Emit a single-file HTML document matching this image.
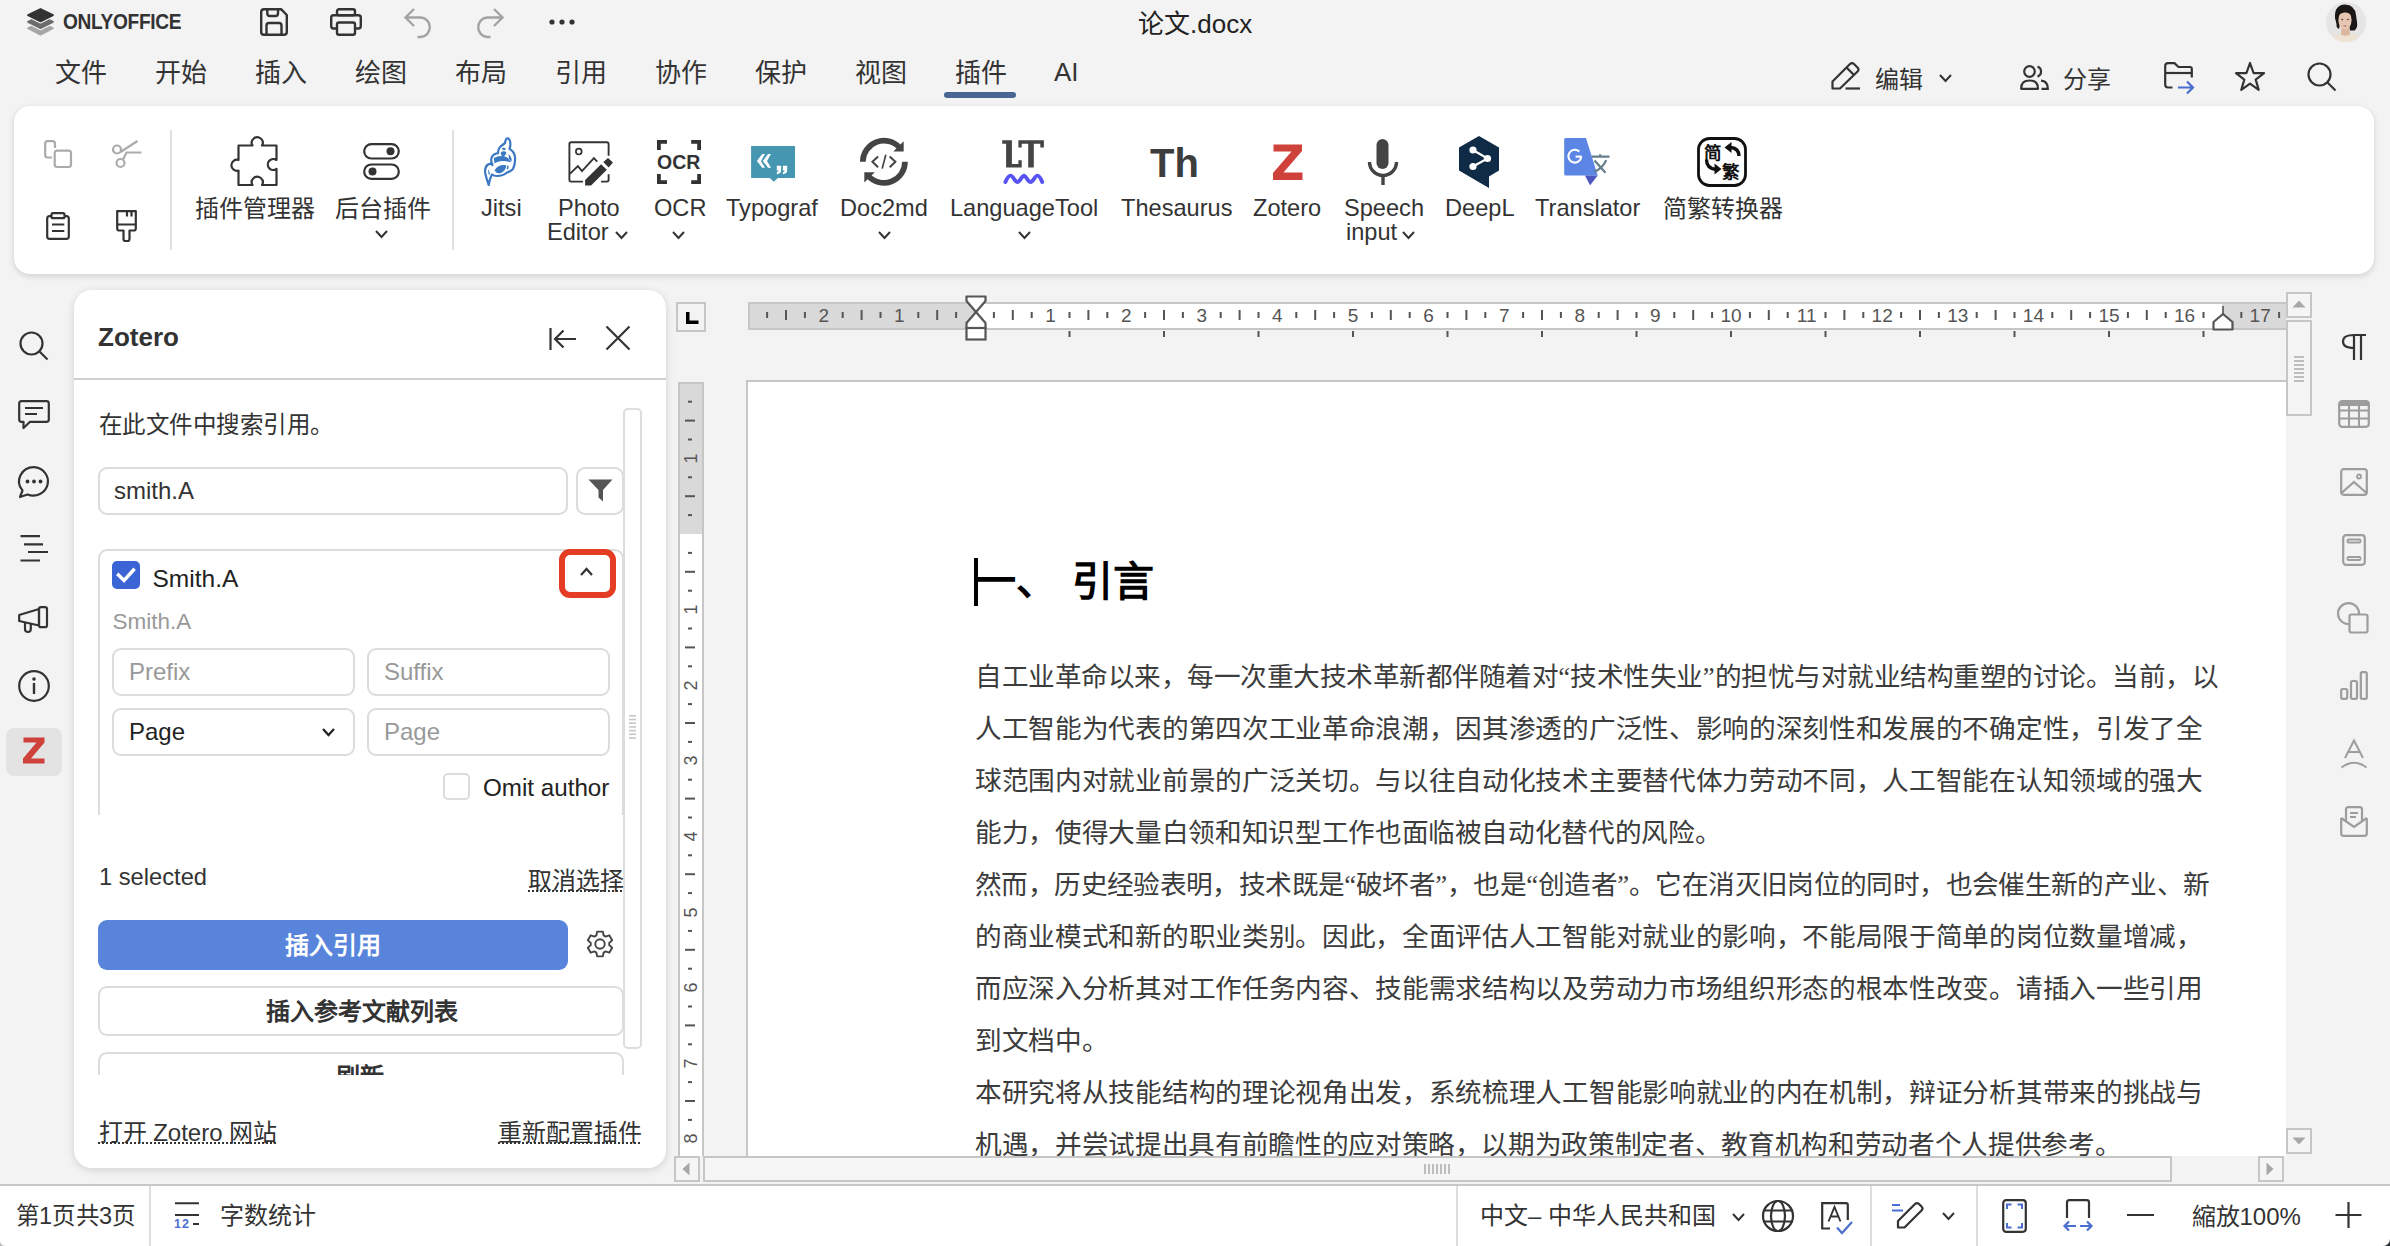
<!DOCTYPE html>
<html lang="zh-CN"><head><meta charset="utf-8"><title>ONLYOFFICE</title>
<style>
*{box-sizing:border-box;margin:0;padding:0}
html,body{width:2390px;height:1246px;overflow:hidden;background:#f3f3f3;font-family:"Liberation Sans",sans-serif;color:#333;position:relative}
.a{position:absolute}
.t{white-space:nowrap}
.t i{font-style:normal;display:inline-block;width:1em;text-align:center}
.f{display:flex}
.nf .t i{-webkit-text-fill-color:transparent;position:relative}
.nf .t i::after{content:'';position:absolute;left:9%;right:9%;top:10%;bottom:6%;background:currentColor;opacity:.42}
.nf .t[style*="weight:700"] i::after{opacity:.62}
.nf .t[style*="font-size:41px"] i::after{opacity:.45}
.nf .t i.p::after{left:12%;right:62%;top:66%;bottom:8%}
.f i{flex-shrink:0}
svg{overflow:visible}
</style></head><body>

<svg class="a" style="left:27px;top:8px;" width="27" height="28" viewBox="0 0 27 28"><path d="M13.5 14.2 L26 20.3 L13.5 26.6 L1 20.3 Z" fill="#f3f3f3" stroke="#f3f3f3" stroke-width="4" stroke-linejoin="round"/><path d="M13.5 14.2 L26 20.3 L13.5 26.6 L1 20.3 Z" fill="#a6a6a6" stroke="#a6a6a6" stroke-width="1.8" stroke-linejoin="round"/><path d="M13.5 7.8 L26 13.9 L13.5 20.2 L1 13.9 Z" fill="#f3f3f3" stroke="#f3f3f3" stroke-width="4" stroke-linejoin="round"/><path d="M13.5 7.8 L26 13.9 L13.5 20.2 L1 13.9 Z" fill="#6c6c6c" stroke="#6c6c6c" stroke-width="1.8" stroke-linejoin="round"/><path d="M13.5 1 L26 7.1 L13.5 13.4 L1 7.1 Z" fill="#f3f3f3" stroke="#f3f3f3" stroke-width="4" stroke-linejoin="round"/><path d="M13.5 1 L26 7.1 L13.5 13.4 L1 7.1 Z" fill="#333" stroke="#333" stroke-width="1.8" stroke-linejoin="round"/></svg>
<div class="a t" style="left:62.5px;top:11.2px;font-size:22px;line-height:22px;color:#333;font-weight:700;font-family:'Liberation Sans',sans-serif;letter-spacing:-0.4px;transform:scaleX(0.87);transform-origin:0 0">ONLYOFFICE</div>
<svg class="a" style="left:260px;top:8px;" width="28" height="28" viewBox="0 0 28 28">
<path d="M4 1.2 H21 L26.8 7 V24 Q26.8 26.8 24 26.8 H4 Q1.2 26.8 1.2 24 V4 Q1.2 1.2 4 1.2 Z" fill="none" stroke="#333" stroke-width="2.4" stroke-linejoin="round"/>
<path d="M7.3 1.2 V5.5 Q7.3 8 9.8 8 H15.5 Q18 8 18 5.5 V1.2" fill="none" stroke="#333" stroke-width="2.4"/>
<path d="M6.5 26.8 V17.5 Q6.5 15 9 15 H19 Q21.5 15 21.5 17.5 V26.8" fill="none" stroke="#333" stroke-width="2.4"/>
</svg>
<svg class="a" style="left:330px;top:8px;" width="32" height="28" viewBox="0 0 32 28">
<rect x="7" y="1.2" width="18" height="6" rx="2" fill="none" stroke="#333" stroke-width="2.4"/>
<path d="M6.5 20.5 H3.5 Q1.2 20.5 1.2 18 V9.5 Q1.2 7.2 3.5 7.2 H28.5 Q30.8 7.2 30.8 9.5 V18 Q30.8 20.5 28.5 20.5 H25.5" fill="none" stroke="#333" stroke-width="2.4"/>
<rect x="7" y="14.5" width="18" height="12.3" rx="2" fill="none" stroke="#333" stroke-width="2.4"/>
</svg>
<svg class="a" style="left:404px;top:8px;" width="28" height="30" viewBox="0 0 28 30">
<path d="M10 1 L1.5 9.5 L10 18 M1.5 9.5 H17 A9.8 9.8 0 0 1 17 29 H13.5" fill="none" stroke="#a3a3a3" stroke-width="2.4" stroke-linecap="butt" stroke-linejoin="miter"/>
</svg>
<svg class="a" style="left:476px;top:8px;" width="28" height="30" viewBox="0 0 28 30">
<path d="M18 1 L26.5 9.5 L18 18 M26.5 9.5 H11 A9.8 9.8 0 0 0 11 29 H14.5" fill="none" stroke="#a3a3a3" stroke-width="2.4"/>
</svg>
<svg class="a" style="left:548px;top:18px;" width="28" height="8" viewBox="0 0 28 8"><circle cx="4" cy="4" r="2.6" fill="#333"/><circle cx="14" cy="4" r="2.6" fill="#333"/><circle cx="24" cy="4" r="2.6" fill="#333"/></svg>
<div class="a t" style="left:1138px;top:10.8px;font-size:26px;line-height:26px;color:#222;font-weight:400;font-family:'Liberation Sans',sans-serif;"><i>论</i><i>文</i>.docx</div>
<svg class="a" style="left:2326px;top:2px;" width="40" height="40" viewBox="0 0 40 40">
<defs><clipPath id="av"><circle cx="20" cy="20" r="20"/></clipPath></defs>
<g clip-path="url(#av)">
<rect width="40" height="40" fill="#e5e5e5"/>
<path d="M9 16 Q8 3 19 2.5 Q29 3 30 13 L31 20 Q32 26 28.5 28.5 L24 28.5 L23 22 L14 22 L13 27 Q10 26 10.5 22 Z" fill="#1b1716"/>
<ellipse cx="20.5" cy="41" rx="17" ry="10" fill="#eee3d3"/>
<path d="M15.5 24 H23 L24 32.5 Q19.5 35 15 32.5 Z" fill="#dcb79e"/>
<ellipse cx="19" cy="18" rx="6.6" ry="9.6" fill="#e6c6b0"/>
<path d="M11.5 14 Q13 7 20 7.5 Q26 8.5 26.5 15 Q24 10 18 10.5 Q14 11 11.5 14 Z" fill="#1b1716"/>
<ellipse cx="16.2" cy="17.5" rx="1.3" ry="0.7" fill="#6b5a55"/>
<ellipse cx="22" cy="17.5" rx="1.3" ry="0.7" fill="#6b5a55"/>
<ellipse cx="19" cy="24" rx="1.8" ry="0.8" fill="#c07f78"/>
</g></svg>
<div class="a t" style="left:55px;top:59.8px;font-size:26px;line-height:26px;color:#333;font-weight:400;font-family:'Liberation Sans',sans-serif;"><i>文</i><i>件</i></div>
<div class="a t" style="left:155px;top:59.8px;font-size:26px;line-height:26px;color:#333;font-weight:400;font-family:'Liberation Sans',sans-serif;"><i>开</i><i>始</i></div>
<div class="a t" style="left:255px;top:59.8px;font-size:26px;line-height:26px;color:#333;font-weight:400;font-family:'Liberation Sans',sans-serif;"><i>插</i><i>入</i></div>
<div class="a t" style="left:355px;top:59.8px;font-size:26px;line-height:26px;color:#333;font-weight:400;font-family:'Liberation Sans',sans-serif;"><i>绘</i><i>图</i></div>
<div class="a t" style="left:455px;top:59.8px;font-size:26px;line-height:26px;color:#333;font-weight:400;font-family:'Liberation Sans',sans-serif;"><i>布</i><i>局</i></div>
<div class="a t" style="left:555px;top:59.8px;font-size:26px;line-height:26px;color:#333;font-weight:400;font-family:'Liberation Sans',sans-serif;"><i>引</i><i>用</i></div>
<div class="a t" style="left:655px;top:59.8px;font-size:26px;line-height:26px;color:#333;font-weight:400;font-family:'Liberation Sans',sans-serif;"><i>协</i><i>作</i></div>
<div class="a t" style="left:755px;top:59.8px;font-size:26px;line-height:26px;color:#333;font-weight:400;font-family:'Liberation Sans',sans-serif;"><i>保</i><i>护</i></div>
<div class="a t" style="left:855px;top:59.8px;font-size:26px;line-height:26px;color:#333;font-weight:400;font-family:'Liberation Sans',sans-serif;"><i>视</i><i>图</i></div>
<div class="a t" style="left:955px;top:59.8px;font-size:26px;line-height:26px;color:#333;font-weight:400;font-family:'Liberation Sans',sans-serif;"><i>插</i><i>件</i></div>
<div class="a t" style="left:1054px;top:58.8px;font-size:26px;line-height:26px;color:#333;font-weight:400;font-family:'Liberation Sans',sans-serif;">AI</div>
<div class="a" style="left:944px;top:92px;width:72px;height:6px;background:#486591;border-radius:3px"></div>
<svg class="a" style="left:1831px;top:61px;" width="30" height="29" viewBox="0 0 30 29">
<path d="M1.5 27.5 V20.5 L19 3 Q21 1 23 3 L26.5 6.5 Q28.5 8.5 26.5 10.5 L9 27.5 Z" fill="none" stroke="#333" stroke-width="2.2" stroke-linejoin="round"/>
<path d="M15.5 6.5 L23 14" fill="none" stroke="#333" stroke-width="2.2"/>
<path d="M14.5 27.5 H29" fill="none" stroke="#333" stroke-width="2.2"/>
</svg>
<div class="a t" style="left:1875px;top:67.5px;font-size:24px;line-height:24px;color:#333;font-weight:400;font-family:'Liberation Sans',sans-serif;"><i>编</i><i>辑</i></div>
<svg class="a" style="left:1939.0px;top:74px;" width="13" height="8.5" viewBox="0 0 13 8.5"><path d="M1 1 L6.5 7.0 L12 1" fill="none" stroke="#333" stroke-width="2"/></svg>
<svg class="a" style="left:2020px;top:65px;" width="29" height="25" viewBox="0 0 29 25">
<circle cx="9.5" cy="6.5" r="5.3" fill="none" stroke="#333" stroke-width="2.2"/>
<path d="M1.2 23.8 Q1 15.5 9.5 15.5 Q18 15.5 18 23.8 Z" fill="none" stroke="#333" stroke-width="2.2" stroke-linejoin="round"/>
<path d="M17.5 1.6 A5.3 5.3 0 0 1 17.5 11.6" fill="none" stroke="#333" stroke-width="2.2"/>
<path d="M21 15.6 Q27.8 16 27.8 23.8 H21.5" fill="none" stroke="#333" stroke-width="2.2"/>
</svg>
<div class="a t" style="left:2063px;top:67.5px;font-size:24px;line-height:24px;color:#333;font-weight:400;font-family:'Liberation Sans',sans-serif;"><i>分</i><i>享</i></div>
<svg class="a" style="left:2164px;top:62px;" width="31" height="34" viewBox="0 0 31 34">
<path d="M8.5 25.5 H4 Q1.2 25.5 1.2 22.5 V4 Q1.2 1.2 4 1.2 H10.5 L14.5 5 H26 Q27.8 5 27.8 7 V15.5" fill="none" stroke="#333" stroke-width="2.2"/>
<path d="M1.2 11 H27.5" fill="none" stroke="#333" stroke-width="2.2"/>
<path d="M14 25.5 H29 M23 19.5 L29 25.5 L23 31.5" fill="none" stroke="#4b6fcf" stroke-width="2.2"/>
</svg>
<svg class="a" style="left:2234px;top:61px;" width="32" height="30" viewBox="0 0 32 30">
<path d="M16 2 L19.6 12.2 L30 12.2 L21.7 18.6 L24.7 28.8 L16 22.6 L7.3 28.8 L10.3 18.6 L2 12.2 L12.4 12.2 Z" fill="none" stroke="#333" stroke-width="2.2" stroke-linejoin="round"/>
</svg>
<svg class="a" style="left:2307px;top:62px;" width="30" height="30" viewBox="0 0 30 30">
<circle cx="12.5" cy="12.5" r="11" fill="none" stroke="#333" stroke-width="2.2"/>
<path d="M20.5 20.5 L28.5 28.5" stroke="#333" stroke-width="2.2"/>
</svg>
<div class="a" style="left:14px;top:106px;width:2360px;height:168px;background:#fff;border-radius:16px;box-shadow:0 2px 6px rgba(0,0,0,0.15)"></div>
<svg class="a" style="left:44px;top:140px;" width="28" height="28" viewBox="0 0 28 28">
<path d="M11 8 V3.5 Q11 1.2 8.5 1.2 H3.5 Q1.2 1.2 1.2 3.5 V15 Q1.2 17.5 3.5 17.5 H8" fill="none" stroke="#ababab" stroke-width="2.2"/>
<rect x="10.7" y="10.7" width="16.3" height="16.3" rx="2.5" fill="none" stroke="#ababab" stroke-width="2.2"/>
</svg>
<svg class="a" style="left:112px;top:140px;" width="30" height="28" viewBox="0 0 30 28">
<circle cx="5" cy="9.5" r="4" fill="none" stroke="#ababab" stroke-width="2.2"/>
<circle cx="8.5" cy="23" r="4" fill="none" stroke="#ababab" stroke-width="2.2"/>
<path d="M8.5 12 L25.5 1 M11 19.5 L14.5 12.5 H29.5" fill="none" stroke="#ababab" stroke-width="2.2"/>
</svg>
<svg class="a" style="left:46px;top:212px;" width="24" height="28" viewBox="0 0 24 28">
<path d="M5 4.2 H3.5 Q1.2 4.2 1.2 6.5 V24.5 Q1.2 26.8 3.5 26.8 H20.5 Q22.8 26.8 22.8 24.5 V6.5 Q22.8 4.2 20.5 4.2 H19" fill="none" stroke="#333" stroke-width="2.2"/>
<rect x="5.5" y="1.2" width="13" height="5" rx="1.5" fill="none" stroke="#333" stroke-width="2.2"/>
<path d="M6 12.5 H18.3 M6 19 H18.3" stroke="#333" stroke-width="2.2"/>
</svg>
<svg class="a" style="left:116px;top:210px;" width="21" height="32" viewBox="0 0 21 32">
<path d="M1.2 1.2 H19.8 V18.5 Q19.8 20.5 17.8 20.5 H13.5 V29 Q13.5 31 11.5 31 H9.5 Q7.5 31 7.5 29 V20.5 H3.2 Q1.2 20.5 1.2 18.5 Z" fill="none" stroke="#333" stroke-width="2.2" stroke-linejoin="round"/>
<path d="M1.2 14.5 H19.8 M11 1.2 V6.5 M15.5 1.2 V6.5" stroke="#333" stroke-width="2.2"/>
</svg>
<div class="a" style="left:170px;top:130px;width:2px;height:120px;background:#e0e0e0"></div>
<svg class="a" style="left:231px;top:135px;" width="52" height="52" viewBox="0 0 52 52">
<path d="M7.5 10.5 H21.5 A5.5 5.5 0 1 1 31 10.5 H45.5 V25 A5.5 5.5 0 1 0 45.5 34 V50 H31 A5.5 5.5 0 1 0 21.5 50 H7.5 V35.5 A5.5 5.5 0 1 1 7.5 25 Z" fill="none" stroke="#333" stroke-width="2.2" stroke-linejoin="round"/>
</svg>
<div class="a t" style="left:195px;top:196.7px;font-size:24px;line-height:24px;color:#333;font-weight:400;font-family:'Liberation Sans',sans-serif;"><i>插</i><i>件</i><i>管</i><i>理</i><i>器</i></div>
<svg class="a" style="left:363px;top:143px;" width="37" height="38" viewBox="0 0 37 38">
<rect x="1.2" y="1.2" width="34.6" height="14.3" rx="7.15" fill="none" stroke="#333" stroke-width="2.2"/>
<rect x="1.2" y="21.5" width="34.6" height="14.3" rx="7.15" fill="none" stroke="#333" stroke-width="2.2"/>
<circle cx="27.5" cy="8.3" r="4" fill="#333"/>
<circle cx="9.5" cy="28.6" r="4" fill="#333"/>
</svg>
<div class="a t" style="left:335px;top:196.7px;font-size:24px;line-height:24px;color:#333;font-weight:400;font-family:'Liberation Sans',sans-serif;"><i>后</i><i>台</i><i>插</i><i>件</i></div>
<svg class="a" style="left:375.3px;top:229.5px;" width="13" height="8.5" viewBox="0 0 13 8.5"><path d="M1 1 L6.5 7.0 L12 1" fill="none" stroke="#333" stroke-width="2"/></svg>
<div class="a" style="left:452px;top:130px;width:2px;height:120px;background:#e0e0e0"></div>
<svg class="a" style="left:478px;top:132px;" width="44" height="58" viewBox="0 0 44 58">
<path d="M10.7 53 Q8.5 47 7.2 41 Q6.5 35 10 32.5 Q12.5 31 14.5 33 Q12.5 29 13.5 26 Q15 22 20 21.2 Q20 17 22 15 Q25 12.5 27 11 Q27.5 7 29 6.5 Q31 6 32 9 Q33 13 31.5 17 Q36 19 37 25 Q37.5 32 35 37 Q32 40 29 40.5 Q25 44 19 44 Q15.5 44 14 42.5 Q12 46 10.7 53 Z" fill="#fff" stroke="#3b78c4" stroke-width="2.2" stroke-linejoin="round"/>
<path d="M15.8 26 Q20 23.5 25 24 Q30 24.5 33.5 30.5 Q27 28.5 22 29.2 Q18 30 16.5 31.5 Z" fill="#3b78c4"/>
<path d="M16.5 38.5 Q19 34 23 33.2 Q26 32.6 28.3 33.3 Q28 38.5 23 41 Q18.5 42 16.5 38.5 Z" fill="#3b78c4"/>
<path d="M22.8 20.5 Q25.5 18.2 28.2 20 Q28.5 23 25.5 24.4 Q22.5 23.8 22.8 20.5 Z" fill="#3b78c4"/>
<path d="M23.5 16.5 Q26.5 15 28 17 L26 18.5 Z" fill="#3b78c4"/>
<path d="M30.5 22 Q34 25 33.8 29.5 L31 27 Z M10 37 Q11.5 39 12 43 L10.5 42 Z M29.5 33 Q31.5 34 30 38 L28.8 36.5 Z" fill="#3b78c4"/>
</svg>
<div class="a t" style="left:481px;top:197.4px;font-size:23.6px;line-height:23.6px;color:#333;font-weight:400;font-family:'Liberation Sans',sans-serif;">Jitsi</div>
<svg class="a" style="left:568px;top:141px;" width="47" height="46" viewBox="0 0 47 46">
<path d="M40.6 14.7 V3 Q40.6 1.2 38.8 1.2 H3.2 Q1.4 1.2 1.4 3 V38.8 Q1.4 40.6 3.2 40.6 H14.9" fill="none" stroke="#333" stroke-width="1.9"/>
<path d="M33.1 40.6 H38.8 Q40.6 40.6 40.6 38.8 V33.2" fill="none" stroke="#333" stroke-width="1.9"/>
<circle cx="10.8" cy="10.6" r="2.9" fill="none" stroke="#333" stroke-width="1.7"/>
<path d="M1.8 32.9 L9.9 25.1 L14 30.1 L25.9 17.2 L29.2 20.6" fill="none" stroke="#333" stroke-width="1.9"/>
<path d="M17.1 38.9 L33.1 23.2 L38.8 28.8 L23.1 44.5 H17.1 Z" fill="#333"/>
<path d="M35.3 21 L40 16.9 L45 21.6 L40.7 26.6 Z" fill="#333"/>
</svg>
<div class="a t" style="left:558px;top:197.4px;font-size:23.6px;line-height:23.6px;color:#333;font-weight:400;font-family:'Liberation Sans',sans-serif;">Photo</div>
<div class="a t" style="left:547px;top:221.4px;font-size:23.6px;line-height:23.6px;color:#333;font-weight:400;font-family:'Liberation Sans',sans-serif;">Editor</div>
<svg class="a" style="left:614.8px;top:230.5px;" width="13" height="8.5" viewBox="0 0 13 8.5"><path d="M1 1 L6.5 7.0 L12 1" fill="none" stroke="#333" stroke-width="2"/></svg>
<svg class="a" style="left:656px;top:139px;" width="46" height="46" viewBox="0 0 46 46">
<path d="M2.9 11 V2.9 H11 M35.2 2.9 H43.1 V11 M43.1 35 V43.1 H35.2 M11 43.1 H2.9 V35" fill="none" stroke="#333" stroke-width="3.8"/>
<text x="1" y="30.2" font-family="Liberation Sans" font-weight="700" font-size="20.5" fill="#333" textLength="43.3" lengthAdjust="spacingAndGlyphs">OCR</text>
</svg>
<div class="a t" style="left:654px;top:197.4px;font-size:23.6px;line-height:23.6px;color:#333;font-weight:400;font-family:'Liberation Sans',sans-serif;">OCR</div>
<svg class="a" style="left:672.0px;top:230.5px;" width="13" height="8.5" viewBox="0 0 13 8.5"><path d="M1 1 L6.5 7.0 L12 1" fill="none" stroke="#333" stroke-width="2"/></svg>
<svg class="a" style="left:750px;top:145px;" width="46" height="38" viewBox="0 0 46 38">
<path d="M1.1 1 H45 V32.9 H27.9 L23.8 36.8 L19.7 32.9 H1.1 Z" fill="#4596b1"/>
<path d="M12.2 8.9 H15 L11 16 L15 22.8 H12.2 L6.9 16 Z" fill="#fff"/>
<path d="M18.1 8.9 H21 L17 16 L21 22.8 H18.1 L12.8 16 Z" fill="#fff"/>
<path d="M26.8 20.8 H31.1 V25.6 Q31 28.8 26.8 29.2 V27.3 Q28.5 26.8 28.7 25.6 H26.8 Z" fill="#fff"/>
<path d="M32.9 20.8 H37.2 V25.6 Q37.1 28.8 32.9 29.2 V27.3 Q34.6 26.8 34.8 25.6 H32.9 Z" fill="#fff"/>
</svg>
<div class="a t" style="left:726px;top:197.4px;font-size:23.6px;line-height:23.6px;color:#333;font-weight:400;font-family:'Liberation Sans',sans-serif;">Typograf</div>
<svg class="a" style="left:855px;top:133px;" width="55" height="55" viewBox="0 0 55 55">
<path d="M7.8 28.8 A21.1 21.1 0 0 1 44.6 14.7" fill="none" stroke="#444" stroke-width="5.7"/>
<path d="M48.7 8.2 L48.7 18.6 L38.3 18.6 Z" fill="#444"/>
<path d="M50 28.8 A21.1 21.1 0 0 1 13.2 42.9" fill="none" stroke="#444" stroke-width="5.7"/>
<path d="M9.3 39.3 L19.8 39.3 L9.3 49.4 Z" fill="#444"/>
<path d="M23.1 23.4 L17.4 28.8 L23.1 34.3 M34.7 23.4 L40.4 28.8 L34.7 34.3" fill="none" stroke="#444" stroke-width="2"/>
<path d="M30.8 21.7 L27.2 35.6" fill="none" stroke="#444" stroke-width="1.7"/>
</svg>
<div class="a t" style="left:840px;top:197.4px;font-size:23.6px;line-height:23.6px;color:#333;font-weight:400;font-family:'Liberation Sans',sans-serif;">Doc2md</div>
<svg class="a" style="left:877.5px;top:230.5px;" width="13" height="8.5" viewBox="0 0 13 8.5"><path d="M1 1 L6.5 7.0 L12 1" fill="none" stroke="#333" stroke-width="2"/></svg>
<svg class="a" style="left:1001px;top:139px;" width="46" height="46" viewBox="0 0 46 46">
<path d="M1.2 1.2 H10.9 V25 H17.4 V21.2 H20.7 V28.6 H5.1 V4.8 H1.2 Z" fill="#444"/>
<path d="M17.4 1.2 H42.9 V8.6 H39.3 V4.8 H32.8 V28.6 H27.2 V4.8 H20.7 V8.6 H17.4 Z" fill="#444"/>
<path d="M4.4 43 C6.5 38 8 36.6 9.6 36.6 C12 36.6 14 43 16.4 43 C19 43 21 36.6 22.9 36.6 C25 36.6 27 43 29.6 43 C32 43 34 36.6 36.4 36.6 C38.5 36.6 40 40 41.2 43" fill="none" stroke="#5753f2" stroke-width="3.9" stroke-linecap="round"/>
</svg>
<div class="a t" style="left:950px;top:197.4px;font-size:23.6px;line-height:23.6px;color:#333;font-weight:400;font-family:'Liberation Sans',sans-serif;">LanguageTool</div>
<svg class="a" style="left:1017.5px;top:230.5px;" width="13" height="8.5" viewBox="0 0 13 8.5"><path d="M1 1 L6.5 7.0 L12 1" fill="none" stroke="#333" stroke-width="2"/></svg>
<div class="a t" style="left:1150px;top:142.9px;font-size:40px;line-height:40px;color:#3d3d3d;font-weight:700;font-family:'Liberation Sans',sans-serif;">Th</div>
<div class="a t" style="left:1121px;top:197.4px;font-size:23.6px;line-height:23.6px;color:#333;font-weight:400;font-family:'Liberation Sans',sans-serif;">Thesaurus</div>
<svg class="a" style="left:1273px;top:144px;" width="30" height="36" viewBox="0 0 30 36"><path d="M0.5 0.5 H29 V7 L10.5 28.5 H29.5 V36 H0 V29 L18.5 7.5 H0.5 Z" fill="#cf413b"/></svg>
<div class="a t" style="left:1253px;top:197.4px;font-size:23.6px;line-height:23.6px;color:#333;font-weight:400;font-family:'Liberation Sans',sans-serif;">Zotero</div>
<svg class="a" style="left:1367px;top:138px;" width="32" height="48" viewBox="0 0 32 48">
<rect x="9.5" y="1" width="12" height="30" rx="6" fill="#444"/>
<path d="M2.5 24 A13.5 13.5 0 0 0 29.5 24" fill="none" stroke="#444" stroke-width="3.4"/>
<path d="M16 37 V47" stroke="#444" stroke-width="3.4"/>
</svg>
<div class="a t" style="left:1344px;top:197.4px;font-size:23.6px;line-height:23.6px;color:#333;font-weight:400;font-family:'Liberation Sans',sans-serif;">Speech</div>
<div class="a t" style="left:1346px;top:221.4px;font-size:23.6px;line-height:23.6px;color:#333;font-weight:400;font-family:'Liberation Sans',sans-serif;">input</div>
<svg class="a" style="left:1402.0px;top:230.5px;" width="13" height="8.5" viewBox="0 0 13 8.5"><path d="M1 1 L6.5 7.0 L12 1" fill="none" stroke="#333" stroke-width="2"/></svg>
<svg class="a" style="left:1458px;top:135px;" width="42" height="54" viewBox="0 0 42 54">
<path d="M21 1 L41 12.5 V35.5 L31 41.5 V53 L21.5 47.5 L1 35.5 V12.5 Z" fill="#0f2b46"/>
<circle cx="15" cy="15" r="3.6" fill="#fff"/><circle cx="29.5" cy="23.5" r="3.6" fill="#fff"/><circle cx="15" cy="31.5" r="3.6" fill="#fff"/>
<path d="M15 15 L29.5 23.5 L15 31.5" fill="none" stroke="#fff" stroke-width="2.2"/>
</svg>
<div class="a t" style="left:1445px;top:197.4px;font-size:23.6px;line-height:23.6px;color:#333;font-weight:400;font-family:'Liberation Sans',sans-serif;">DeepL</div>
<svg class="a" style="left:1563px;top:137px;" width="48" height="50" viewBox="0 0 48 50">
<path d="M1.2 2.5 Q1.2 1 2.7 1 H23 L34.7 38.6 H2.7 Q1.2 38.6 1.2 37 Z" fill="#5b86e5"/>
<path d="M21.9 38.6 H34.7 L27.1 48.2 Z" fill="#4b56bf"/>
<path d="M18.2 19.2 A6.4 6.4 0 1 1 16.3 14.6" fill="none" stroke="#fff" stroke-width="2.1"/>
<path d="M12.6 19.6 H18.6" stroke="#fff" stroke-width="2.1"/>
<path d="M28.5 19.7 H46.5 M37.2 17.2 V19.7 M31.5 23.5 L42.5 35.8 M43.2 23.2 Q40 31 31.2 35" fill="none" stroke="#667d8c" stroke-width="2.2"/>
</svg>
<div class="a t" style="left:1535px;top:197.4px;font-size:23.6px;line-height:23.6px;color:#333;font-weight:400;font-family:'Liberation Sans',sans-serif;">Translator</div>
<svg class="a" style="left:1697px;top:137px;" width="50" height="50" viewBox="0 0 50 50">
<rect x="1.5" y="1.5" width="47" height="47" rx="11" fill="none" stroke="#111" stroke-width="2.8"/>
<text x="6.5" y="22.3" font-family="Liberation Sans" font-weight="700" font-size="17.5" fill="#111">简</text>
<text x="25" y="40.8" font-family="Liberation Sans" font-weight="700" font-size="17.5" fill="#111">繁</text>
<path d="M42 19 Q42 11 33 10.5" fill="none" stroke="#111" stroke-width="3.3"/>
<path d="M27.5 10.5 L34.5 5 L34.5 16 Z" fill="#111"/>
<path d="M9.5 22.5 Q9.5 31.5 19 32.5" fill="none" stroke="#111" stroke-width="3.3"/>
<path d="M24.5 32 L17.5 37.5 L17.5 26.5 Z" fill="#111"/>
</svg>
<div class="a t" style="left:1663px;top:196.7px;font-size:24px;line-height:24px;color:#333;font-weight:400;font-family:'Liberation Sans',sans-serif;"><i>简</i><i>繁</i><i>转</i><i>换</i><i>器</i></div>
<svg class="a" style="left:19px;top:331px;" width="31" height="31" viewBox="0 0 31 31">
<circle cx="12.5" cy="12.5" r="11" fill="none" stroke="#333" stroke-width="2.2"/>
<path d="M20.5 20.5 L28.5 28.5" stroke="#333" stroke-width="2.2"/>
</svg>
<svg class="a" style="left:18px;top:400px;" width="32" height="30" viewBox="0 0 32 30">
<path d="M3.5 1.2 H28.5 Q30.8 1.2 30.8 3.5 V19.5 Q30.8 21.8 28.5 21.8 H12 L5.5 28 V21.8 H3.5 Q1.2 21.8 1.2 19.5 V3.5 Q1.2 1.2 3.5 1.2 Z" fill="none" stroke="#333" stroke-width="2.2" stroke-linejoin="round"/>
<path d="M7 8 H25 M7 14 H19" stroke="#333" stroke-width="2.2"/>
</svg>
<svg class="a" style="left:18px;top:466px;" width="32" height="33" viewBox="0 0 32 33">
<path d="M16 1.2 A14.8 14.2 0 1 1 9.5 28.5 L2 31 L4.5 24.5 A14.8 14.2 0 0 1 16 1.2 Z" fill="none" stroke="#333" stroke-width="2.2" stroke-linejoin="round"/>
<circle cx="9.5" cy="15.5" r="1.9" fill="#333"/><circle cx="16" cy="15.5" r="1.9" fill="#333"/><circle cx="22.5" cy="15.5" r="1.9" fill="#333"/>
</svg>
<svg class="a" style="left:20px;top:535px;" width="28" height="28" viewBox="0 0 28 28">
<path d="M0.5 1.2 H20 M4 9.4 H23 M8 17 H28 M0.5 25.5 H20" stroke="#333" stroke-width="2.2"/>
</svg>
<svg class="a" style="left:18px;top:606px;" width="31" height="28" viewBox="0 0 31 28">
<path d="M1.2 9 L21 3 V19.5 L1.2 15 Z" fill="none" stroke="#333" stroke-width="2.2" stroke-linejoin="round"/>
<rect x="21" y="1.2" width="8" height="20" rx="2" fill="none" stroke="#333" stroke-width="2.2"/>
<path d="M7 16.5 V23 Q7 26 10 26 Q12.8 26 12.8 23 V18" fill="none" stroke="#333" stroke-width="2.2"/>
</svg>
<svg class="a" style="left:18px;top:670px;" width="32" height="32" viewBox="0 0 32 32">
<circle cx="16" cy="16" r="14.8" fill="none" stroke="#333" stroke-width="2.2"/>
<circle cx="16" cy="9" r="1.8" fill="#333"/>
<path d="M16 13 V24" stroke="#333" stroke-width="2.4"/>
</svg>
<div class="a" style="left:6px;top:728px;width:56px;height:48px;background:#e3e3e3;border-radius:8px"></div>
<svg class="a" style="left:23px;top:737px;" width="22" height="27" viewBox="0 0 22 27"><path d="M0.5 0.5 H21.5 V5.5 L8 21.5 H21.5 V26.5 H0 V21.5 L13.5 5.5 H0.5 Z" fill="#cf413b"/></svg>
<div class="a" style="left:74px;top:290px;width:592px;height:878px;background:#fff;border-radius:18px;box-shadow:0 2px 8px rgba(0,0,0,0.14)"></div>
<div class="a t" style="left:98px;top:324.0px;font-size:26px;line-height:26px;color:#333;font-weight:700;font-family:'Liberation Sans',sans-serif;">Zotero</div>
<svg class="a" style="left:549px;top:327px;" width="28" height="24" viewBox="0 0 28 24">
<path d="M1.5 1 V23" stroke="#333" stroke-width="2.2"/>
<path d="M14.5 3.5 L6 12 L14.5 20.5 M6 12 H27" fill="none" stroke="#333" stroke-width="2.2"/>
</svg>
<svg class="a" style="left:605px;top:325px;" width="26" height="26" viewBox="0 0 26 26"><path d="M1.5 1.5 L24.5 24.5 M24.5 1.5 L1.5 24.5" stroke="#333" stroke-width="2.2"/></svg>
<div class="a" style="left:74px;top:378px;width:592px;height:2px;background:#cfcfcf"></div>
<div class="a t" style="left:98.5px;top:414.0px;font-size:23.5px;line-height:23.5px;color:#333;font-weight:400;font-family:'Liberation Sans',sans-serif;"><i>在</i><i>此</i><i>文</i><i>件</i><i>中</i><i>搜</i><i>索</i><i>引</i><i>用</i><i class="p">。</i></div>
<div class="a" style="left:98px;top:467px;width:470px;height:48px;border:2px solid #dcdcdc;border-radius:9px;background:#fff"></div>
<div class="a t" style="left:114px;top:478.7px;font-size:24px;line-height:24px;color:#333;font-weight:400;font-family:'Liberation Sans',sans-serif;">smith.A</div>
<div class="a" style="left:576px;top:467px;width:48px;height:48px;border:2px solid #dcdcdc;border-radius:9px;background:#fff"></div>
<svg class="a" style="left:588px;top:479px;" width="25" height="23" viewBox="0 0 25 23"><path d="M0.5 0.5 H24.5 L15 11 V22.5 L10.5 18.5 V11 Z" fill="#555"/></svg>
<div class="a" style="left:623px;top:408px;width:19px;height:641px;border:2px solid #dedede;border-radius:5px;background:#fff"></div>
<div class="a" style="left:98px;top:549px;width:526px;height:266px;overflow:hidden">
<div class="a" style="left:0;top:0;width:526px;height:272px;border:2px solid #dcdcdc;border-radius:9px;background:#fff"></div>
</div>
<div class="a" style="left:623px;top:549px;width:2px;height:266px;background:#dcdcdc"></div>
<div class="a" style="left:112px;top:561px;width:28px;height:28px;background:#3b65d4;border-radius:5px"></div>
<svg class="a" style="left:116px;top:566px;" width="20" height="18" viewBox="0 0 20 18"><path d="M2.5 9 L8 14.5 L17.5 4" fill="none" stroke="#fff" stroke-width="3.4" stroke-linecap="square"/></svg>
<div class="a t" style="left:152.5px;top:566.6px;font-size:24.5px;line-height:24.5px;color:#222;font-weight:400;font-family:'Liberation Sans',sans-serif;">Smith.A</div>
<div class="a" style="left:559px;top:549px;width:57px;height:49px;border:6px solid #e43d23;border-radius:11px;background:#fff"></div>
<svg class="a" style="left:580px;top:567px;" width="13" height="9" viewBox="0 0 13 9"><path d="M1 8 L6.5 2 L12 8" fill="none" stroke="#333" stroke-width="2.2"/></svg>
<div class="a t" style="left:112.5px;top:611.0px;font-size:22.5px;line-height:22.5px;color:#999;font-weight:400;font-family:'Liberation Sans',sans-serif;">Smith.A</div>
<div class="a" style="left:112px;top:648px;width:243px;height:48px;border:2px solid #dcdcdc;border-radius:9px;background:#fff"></div>
<div class="a" style="left:367px;top:648px;width:243px;height:48px;border:2px solid #dcdcdc;border-radius:9px;background:#fff"></div>
<div class="a t" style="left:129px;top:659.7px;font-size:24px;line-height:24px;color:#999;font-weight:400;font-family:'Liberation Sans',sans-serif;">Prefix</div>
<div class="a t" style="left:384px;top:659.7px;font-size:24px;line-height:24px;color:#999;font-weight:400;font-family:'Liberation Sans',sans-serif;">Suffix</div>
<div class="a" style="left:112px;top:708px;width:243px;height:48px;border:2px solid #dcdcdc;border-radius:9px;background:#fff"></div>
<div class="a" style="left:367px;top:708px;width:243px;height:48px;border:2px solid #dcdcdc;border-radius:9px;background:#fff"></div>
<div class="a t" style="left:129px;top:719.7px;font-size:24px;line-height:24px;color:#222;font-weight:400;font-family:'Liberation Sans',sans-serif;">Page</div>
<svg class="a" style="left:322.0px;top:727.5px;" width="13" height="8.5" viewBox="0 0 13 8.5"><path d="M1 1 L6.5 7.0 L12 1" fill="none" stroke="#222" stroke-width="2.2"/></svg>
<div class="a t" style="left:384px;top:719.7px;font-size:24px;line-height:24px;color:#999;font-weight:400;font-family:'Liberation Sans',sans-serif;">Page</div>
<div class="a" style="left:443px;top:773px;width:27px;height:27px;border:2px solid #dcdcdc;border-radius:5px;background:#fff"></div>
<div class="a t" style="left:483px;top:776.2px;font-size:24.2px;line-height:24.2px;color:#222;font-weight:400;font-family:'Liberation Sans',sans-serif;">Omit author</div>
<svg class="a" style="left:629px;top:715px;" width="8" height="27" viewBox="0 0 8 27"><rect x="0" y="0.0" width="7" height="1.6" fill="#c8c8c8"/><rect x="0" y="3.7" width="7" height="1.6" fill="#c8c8c8"/><rect x="0" y="7.4" width="7" height="1.6" fill="#c8c8c8"/><rect x="0" y="11.1" width="7" height="1.6" fill="#c8c8c8"/><rect x="0" y="14.8" width="7" height="1.6" fill="#c8c8c8"/><rect x="0" y="18.5" width="7" height="1.6" fill="#c8c8c8"/><rect x="0" y="22.2" width="7" height="1.6" fill="#c8c8c8"/></svg>
<div class="a t" style="left:99px;top:865.7px;font-size:23.7px;line-height:23.7px;color:#333;font-weight:400;font-family:'Liberation Sans',sans-serif;">1 selected</div>
<div class="a t" style="left:528px;top:869.2px;font-size:24px;line-height:24px;color:#333;font-weight:400;font-family:'Liberation Sans',sans-serif;"><i>取</i><i>消</i><i>选</i><i>择</i></div>
<svg class="a" style="left:528px;top:890px;" width="95" height="2" viewBox="0 0 95 2"><line x1="0" y1="1" x2="95" y2="1" stroke="#333" stroke-width="2" stroke-dasharray="2 2"/></svg>
<div class="a" style="left:98px;top:920px;width:470px;height:50px;background:#5884dc;border-radius:9px"></div>
<div class="a t" style="left:285px;top:933.7px;font-size:24px;line-height:24px;color:#fff;font-weight:700;font-family:'Liberation Sans',sans-serif;"><i>插</i><i>入</i><i>引</i><i>用</i></div>
<svg class="a" style="left:586px;top:930px;" width="28" height="28" viewBox="0 0 28 28"><path d="M10.37 5.44 L11.14 1.63 L16.86 1.63 L17.63 5.44 L19.60 6.57 L23.29 5.34 L26.15 10.29 L23.23 12.87 L23.23 15.13 L26.15 17.71 L23.29 22.66 L19.60 21.43 L17.63 22.56 L16.86 26.37 L11.14 26.37 L10.37 22.56 L8.40 21.43 L4.71 22.66 L1.85 17.71 L4.77 15.13 L4.77 12.87 L1.85 10.29 L4.71 5.34 L8.40 6.57 Z" fill="none" stroke="#444" stroke-width="1.9" stroke-linejoin="round"/><circle cx="14" cy="14" r="4.7" fill="none" stroke="#444" stroke-width="1.9"/></svg>
<div class="a" style="left:98px;top:986px;width:526px;height:50px;border:2px solid #dcdcdc;border-radius:9px;background:#fff"></div>
<div class="a t" style="left:266px;top:1000.2px;font-size:24px;line-height:24px;color:#333;font-weight:700;font-family:'Liberation Sans',sans-serif;"><i>插</i><i>入</i><i>参</i><i>考</i><i>文</i><i>献</i><i>列</i><i>表</i></div>
<div class="a" style="left:98px;top:1052px;width:526px;height:23px;overflow:hidden">
<div class="a" style="left:0;top:0;width:526px;height:50px;border:2px solid #dcdcdc;border-radius:9px;background:#fff"></div>
<div class="a t" style="left:262px;top:12.5px;transform:translateX(-50%);font-size:24px;line-height:24px;font-weight:700;color:#333"><i>刷</i><i>新</i></div>
</div>
<div class="a t" style="left:98.5px;top:1121.2px;font-size:24px;line-height:24px;color:#333;font-weight:400;font-family:'Liberation Sans',sans-serif;"><i>打</i><i>开</i> Zotero <i>网</i><i>站</i></div>
<svg class="a" style="left:98px;top:1142px;" width="179" height="2" viewBox="0 0 179 2"><line x1="0" y1="1" x2="179" y2="1" stroke="#333" stroke-width="2" stroke-dasharray="2 2"/></svg>
<div class="a t" style="left:498px;top:1121.2px;font-size:24px;line-height:24px;color:#333;font-weight:400;font-family:'Liberation Sans',sans-serif;"><i>重</i><i>新</i><i>配</i><i>置</i><i>插</i><i>件</i></div>
<svg class="a" style="left:498px;top:1142px;" width="144" height="2" viewBox="0 0 144 2"><line x1="0" y1="1" x2="144" y2="1" stroke="#333" stroke-width="2" stroke-dasharray="2 2"/></svg>
<div class="a" style="left:676px;top:302px;width:30px;height:30px;border:2px solid #c6c6c6;background:#f3f3f3"></div>
<svg class="a" style="left:686px;top:312px;" width="13" height="12" viewBox="0 0 13 12"><path d="M0 0 H3.5 V8.5 H12.5 V12 H0 Z" fill="#000"/></svg>
<div class="a" style="left:748px;top:302px;width:1538px;height:28px;background:#d9d9d9;border-top:2px solid #c6c6c6;border-bottom:2px solid #c6c6c6;border-left:2px solid #c6c6c6"></div>
<div class="a" style="left:975px;top:304px;width:1247px;height:24px;background:#fff"></div>
<svg class="a" style="left:748px;top:302px;" width="1538" height="28" viewBox="0 0 1538 28"><rect x="18.1" y="10.0" width="2" height="6" fill="#555"/><rect x="37.0" y="8.0" width="2" height="10" fill="#555"/><rect x="55.9" y="10.0" width="2" height="6" fill="#555"/><rect x="93.7" y="10.0" width="2" height="6" fill="#555"/><rect x="112.6" y="8.0" width="2" height="10" fill="#555"/><rect x="131.5" y="10.0" width="2" height="6" fill="#555"/><rect x="169.3" y="10.0" width="2" height="6" fill="#555"/><rect x="188.2" y="8.0" width="2" height="10" fill="#555"/><rect x="207.1" y="10.0" width="2" height="6" fill="#555"/><rect x="244.9" y="10.0" width="2" height="6" fill="#555"/><rect x="263.8" y="8.0" width="2" height="10" fill="#555"/><rect x="282.7" y="10.0" width="2" height="6" fill="#555"/><rect x="320.5" y="10.0" width="2" height="6" fill="#555"/><rect x="339.4" y="8.0" width="2" height="10" fill="#555"/><rect x="358.3" y="10.0" width="2" height="6" fill="#555"/><rect x="396.1" y="10.0" width="2" height="6" fill="#555"/><rect x="415.0" y="8.0" width="2" height="10" fill="#555"/><rect x="433.9" y="10.0" width="2" height="6" fill="#555"/><rect x="471.7" y="10.0" width="2" height="6" fill="#555"/><rect x="490.6" y="8.0" width="2" height="10" fill="#555"/><rect x="509.5" y="10.0" width="2" height="6" fill="#555"/><rect x="547.3" y="10.0" width="2" height="6" fill="#555"/><rect x="566.2" y="8.0" width="2" height="10" fill="#555"/><rect x="585.1" y="10.0" width="2" height="6" fill="#555"/><rect x="622.9" y="10.0" width="2" height="6" fill="#555"/><rect x="641.8" y="8.0" width="2" height="10" fill="#555"/><rect x="660.7" y="10.0" width="2" height="6" fill="#555"/><rect x="698.5" y="10.0" width="2" height="6" fill="#555"/><rect x="717.4" y="8.0" width="2" height="10" fill="#555"/><rect x="736.3" y="10.0" width="2" height="6" fill="#555"/><rect x="774.1" y="10.0" width="2" height="6" fill="#555"/><rect x="793.0" y="8.0" width="2" height="10" fill="#555"/><rect x="811.9" y="10.0" width="2" height="6" fill="#555"/><rect x="849.7" y="10.0" width="2" height="6" fill="#555"/><rect x="868.6" y="8.0" width="2" height="10" fill="#555"/><rect x="887.5" y="10.0" width="2" height="6" fill="#555"/><rect x="925.3" y="10.0" width="2" height="6" fill="#555"/><rect x="944.2" y="8.0" width="2" height="10" fill="#555"/><rect x="963.1" y="10.0" width="2" height="6" fill="#555"/><rect x="1000.9" y="10.0" width="2" height="6" fill="#555"/><rect x="1019.8" y="8.0" width="2" height="10" fill="#555"/><rect x="1038.7" y="10.0" width="2" height="6" fill="#555"/><rect x="1076.5" y="10.0" width="2" height="6" fill="#555"/><rect x="1095.4" y="8.0" width="2" height="10" fill="#555"/><rect x="1114.3" y="10.0" width="2" height="6" fill="#555"/><rect x="1152.1" y="10.0" width="2" height="6" fill="#555"/><rect x="1171.0" y="8.0" width="2" height="10" fill="#555"/><rect x="1189.9" y="10.0" width="2" height="6" fill="#555"/><rect x="1227.7" y="10.0" width="2" height="6" fill="#555"/><rect x="1246.6" y="8.0" width="2" height="10" fill="#555"/><rect x="1265.5" y="10.0" width="2" height="6" fill="#555"/><rect x="1303.3" y="10.0" width="2" height="6" fill="#555"/><rect x="1322.2" y="8.0" width="2" height="10" fill="#555"/><rect x="1341.1" y="10.0" width="2" height="6" fill="#555"/><rect x="1378.9" y="10.0" width="2" height="6" fill="#555"/><rect x="1397.8" y="8.0" width="2" height="10" fill="#555"/><rect x="1416.7" y="10.0" width="2" height="6" fill="#555"/><rect x="1454.5" y="10.0" width="2" height="6" fill="#555"/><rect x="1492.3" y="10.0" width="2" height="6" fill="#555"/><rect x="1530.1" y="10.0" width="2" height="6" fill="#555"/></svg>
<div class="a t" style="left:793.8px;top:306.1px;width:60px;text-align:center;font-size:19px;line-height:19px;color:#555">2</div>
<div class="a t" style="left:869.4px;top:306.1px;width:60px;text-align:center;font-size:19px;line-height:19px;color:#555">1</div>
<div class="a t" style="left:1020.6px;top:306.1px;width:60px;text-align:center;font-size:19px;line-height:19px;color:#555">1</div>
<div class="a t" style="left:1096.2px;top:306.1px;width:60px;text-align:center;font-size:19px;line-height:19px;color:#555">2</div>
<div class="a t" style="left:1171.8px;top:306.1px;width:60px;text-align:center;font-size:19px;line-height:19px;color:#555">3</div>
<div class="a t" style="left:1247.4px;top:306.1px;width:60px;text-align:center;font-size:19px;line-height:19px;color:#555">4</div>
<div class="a t" style="left:1323.0px;top:306.1px;width:60px;text-align:center;font-size:19px;line-height:19px;color:#555">5</div>
<div class="a t" style="left:1398.6px;top:306.1px;width:60px;text-align:center;font-size:19px;line-height:19px;color:#555">6</div>
<div class="a t" style="left:1474.2px;top:306.1px;width:60px;text-align:center;font-size:19px;line-height:19px;color:#555">7</div>
<div class="a t" style="left:1549.8px;top:306.1px;width:60px;text-align:center;font-size:19px;line-height:19px;color:#555">8</div>
<div class="a t" style="left:1625.4px;top:306.1px;width:60px;text-align:center;font-size:19px;line-height:19px;color:#555">9</div>
<div class="a t" style="left:1701.0px;top:306.1px;width:60px;text-align:center;font-size:19px;line-height:19px;color:#555">10</div>
<div class="a t" style="left:1776.6px;top:306.1px;width:60px;text-align:center;font-size:19px;line-height:19px;color:#555">11</div>
<div class="a t" style="left:1852.2px;top:306.1px;width:60px;text-align:center;font-size:19px;line-height:19px;color:#555">12</div>
<div class="a t" style="left:1927.8px;top:306.1px;width:60px;text-align:center;font-size:19px;line-height:19px;color:#555">13</div>
<div class="a t" style="left:2003.4px;top:306.1px;width:60px;text-align:center;font-size:19px;line-height:19px;color:#555">14</div>
<div class="a t" style="left:2079.0px;top:306.1px;width:60px;text-align:center;font-size:19px;line-height:19px;color:#555">15</div>
<div class="a t" style="left:2154.6px;top:306.1px;width:60px;text-align:center;font-size:19px;line-height:19px;color:#555">16</div>
<div class="a t" style="left:2230.2px;top:306.1px;width:60px;text-align:center;font-size:19px;line-height:19px;color:#555">17</div>
<svg class="a" style="left:748px;top:331px;" width="1538" height="6" viewBox="0 0 1538 6"><rect x="320.5" y="0" width="2" height="6" fill="#555"/><rect x="415.0" y="0" width="2" height="6" fill="#555"/><rect x="509.5" y="0" width="2" height="6" fill="#555"/><rect x="604.0" y="0" width="2" height="6" fill="#555"/><rect x="698.5" y="0" width="2" height="6" fill="#555"/><rect x="793.0" y="0" width="2" height="6" fill="#555"/><rect x="887.5" y="0" width="2" height="6" fill="#555"/><rect x="982.0" y="0" width="2" height="6" fill="#555"/><rect x="1076.5" y="0" width="2" height="6" fill="#555"/><rect x="1171.0" y="0" width="2" height="6" fill="#555"/><rect x="1265.5" y="0" width="2" height="6" fill="#555"/><rect x="1360.0" y="0" width="2" height="6" fill="#555"/><rect x="1454.5" y="0" width="2" height="6" fill="#555"/></svg>
<svg class="a" style="left:965px;top:295px;" width="22" height="46" viewBox="0 0 22 46">
<path d="M1.5 1.5 H20.5 V6 L11 17 L1.5 6 Z" fill="#fff" stroke="#555" stroke-width="2.2" stroke-linejoin="round"/>
<path d="M11 17 L20.5 28 V33 H1.5 V28 Z" fill="#fff" stroke="#555" stroke-width="2.2" stroke-linejoin="round"/>
<rect x="1.5" y="33" width="19" height="11.5" fill="#fff" stroke="#555" stroke-width="2.2"/>
</svg>
<svg class="a" style="left:2212px;top:306px;" width="22" height="25" viewBox="0 0 22 25">
<path d="M11 0 V8" stroke="#555" stroke-width="1.6"/>
<path d="M11 8 L20.5 16 V23.5 H1.5 V16 Z" fill="#fff" stroke="#555" stroke-width="2.2" stroke-linejoin="round"/>
</svg>
<div class="a" style="left:678px;top:382px;width:26px;height:774px;background:#fff;border:2px solid #c6c6c6;border-bottom:none"></div>
<div class="a" style="left:680px;top:384px;width:22px;height:150px;background:#d9d9d9"></div>
<svg class="a" style="left:678px;top:382px;" width="26" height="774" viewBox="0 0 26 774"><rect x="10.0" y="18.7" width="4" height="2" fill="#555"/><rect x="7.0" y="37.6" width="10" height="2" fill="#555"/><rect x="10.0" y="56.5" width="4" height="2" fill="#555"/><rect x="10.0" y="94.3" width="4" height="2" fill="#555"/><rect x="7.0" y="113.2" width="10" height="2" fill="#555"/><rect x="10.0" y="132.1" width="4" height="2" fill="#555"/><rect x="10.0" y="169.9" width="4" height="2" fill="#555"/><rect x="7.0" y="188.8" width="10" height="2" fill="#555"/><rect x="10.0" y="207.7" width="4" height="2" fill="#555"/><rect x="10.0" y="245.5" width="4" height="2" fill="#555"/><rect x="7.0" y="264.4" width="10" height="2" fill="#555"/><rect x="10.0" y="283.3" width="4" height="2" fill="#555"/><rect x="10.0" y="321.1" width="4" height="2" fill="#555"/><rect x="7.0" y="340.0" width="10" height="2" fill="#555"/><rect x="10.0" y="358.9" width="4" height="2" fill="#555"/><rect x="10.0" y="396.7" width="4" height="2" fill="#555"/><rect x="7.0" y="415.6" width="10" height="2" fill="#555"/><rect x="10.0" y="434.5" width="4" height="2" fill="#555"/><rect x="10.0" y="472.3" width="4" height="2" fill="#555"/><rect x="7.0" y="491.2" width="10" height="2" fill="#555"/><rect x="10.0" y="510.1" width="4" height="2" fill="#555"/><rect x="10.0" y="547.9" width="4" height="2" fill="#555"/><rect x="7.0" y="566.8" width="10" height="2" fill="#555"/><rect x="10.0" y="585.7" width="4" height="2" fill="#555"/><rect x="10.0" y="623.5" width="4" height="2" fill="#555"/><rect x="7.0" y="642.4" width="10" height="2" fill="#555"/><rect x="10.0" y="661.3" width="4" height="2" fill="#555"/><rect x="10.0" y="699.1" width="4" height="2" fill="#555"/><rect x="7.0" y="718.0" width="10" height="2" fill="#555"/><rect x="10.0" y="736.9" width="4" height="2" fill="#555"/></svg>
<div class="a t" style="left:661px;top:448.9px;width:60px;text-align:center;font-size:18px;line-height:19px;color:#555;transform:rotate(-90deg)">1</div>
<div class="a t" style="left:661px;top:600.1px;width:60px;text-align:center;font-size:18px;line-height:19px;color:#555;transform:rotate(-90deg)">1</div>
<div class="a t" style="left:661px;top:675.7px;width:60px;text-align:center;font-size:18px;line-height:19px;color:#555;transform:rotate(-90deg)">2</div>
<div class="a t" style="left:661px;top:751.3px;width:60px;text-align:center;font-size:18px;line-height:19px;color:#555;transform:rotate(-90deg)">3</div>
<div class="a t" style="left:661px;top:826.9px;width:60px;text-align:center;font-size:18px;line-height:19px;color:#555;transform:rotate(-90deg)">4</div>
<div class="a t" style="left:661px;top:902.5px;width:60px;text-align:center;font-size:18px;line-height:19px;color:#555;transform:rotate(-90deg)">5</div>
<div class="a t" style="left:661px;top:978.1px;width:60px;text-align:center;font-size:18px;line-height:19px;color:#555;transform:rotate(-90deg)">6</div>
<div class="a t" style="left:661px;top:1053.7px;width:60px;text-align:center;font-size:18px;line-height:19px;color:#555;transform:rotate(-90deg)">7</div>
<div class="a t" style="left:661px;top:1129.3px;width:60px;text-align:center;font-size:18px;line-height:19px;color:#555;transform:rotate(-90deg)">8</div>
<div class="a" style="left:746px;top:380px;width:1540px;height:776px;background:#fff;border-top:2px solid #c6c6c6;border-left:2px solid #c6c6c6"></div>
<div class="a" style="left:2286px;top:292px;width:26px;height:26px;border:2px solid #c6c6c6;background:#f5f5f5"></div>
<svg class="a" style="left:2292px;top:300px;" width="14" height="8" viewBox="0 0 14 8"><path d="M0.5 7.5 L7 0.5 L13.5 7.5 Z" fill="#a8a8a8"/></svg>
<div class="a" style="left:2286px;top:320px;width:26px;height:96px;border:2px solid #c6c6c6;background:#f5f5f5"></div>
<svg class="a" style="left:2294px;top:356px;" width="10" height="26" viewBox="0 0 10 26"><rect x="0" y="0.0" width="10" height="2" fill="#bdbdbd"/><rect x="0" y="4.0" width="10" height="2" fill="#bdbdbd"/><rect x="0" y="8.0" width="10" height="2" fill="#bdbdbd"/><rect x="0" y="12.0" width="10" height="2" fill="#bdbdbd"/><rect x="0" y="16.0" width="10" height="2" fill="#bdbdbd"/><rect x="0" y="20.0" width="10" height="2" fill="#bdbdbd"/><rect x="0" y="24.0" width="10" height="2" fill="#bdbdbd"/></svg>
<div class="a" style="left:2286px;top:1128px;width:26px;height:26px;border:2px solid #c6c6c6;background:#f5f5f5"></div>
<svg class="a" style="left:2292px;top:1137px;" width="14" height="8" viewBox="0 0 14 8"><path d="M0.5 0.5 L7 7.5 L13.5 0.5 Z" fill="#a8a8a8"/></svg>
<div class="a" style="left:674px;top:1156px;width:26px;height:26px;border:2px solid #c6c6c6;background:#f5f5f5"></div>
<svg class="a" style="left:682px;top:1162px;" width="8" height="14" viewBox="0 0 8 14"><path d="M7.5 0.5 L0.5 7 L7.5 13.5 Z" fill="#a8a8a8"/></svg>
<div class="a" style="left:703px;top:1156px;width:1469px;height:26px;border:2px solid #c6c6c6;background:#f6f6f6"></div>
<svg class="a" style="left:1424px;top:1164px;" width="26" height="10" viewBox="0 0 26 10"><rect x="0.0" y="0" width="2" height="10" fill="#bdbdbd"/><rect x="4.0" y="0" width="2" height="10" fill="#bdbdbd"/><rect x="8.0" y="0" width="2" height="10" fill="#bdbdbd"/><rect x="12.0" y="0" width="2" height="10" fill="#bdbdbd"/><rect x="16.0" y="0" width="2" height="10" fill="#bdbdbd"/><rect x="20.0" y="0" width="2" height="10" fill="#bdbdbd"/><rect x="24.0" y="0" width="2" height="10" fill="#bdbdbd"/></svg>
<div class="a" style="left:2258px;top:1156px;width:26px;height:26px;border:2px solid #c6c6c6;background:#f5f5f5"></div>
<svg class="a" style="left:2266px;top:1162px;" width="8" height="14" viewBox="0 0 8 14"><path d="M0.5 0.5 L7.5 7 L0.5 13.5 Z" fill="#a8a8a8"/></svg>
<div class="a" style="left:974px;top:558px;width:4px;height:48px;background:#000"></div>
<div class="a t" style="left:975px;top:560.9px;font-size:41px;line-height:41px;color:#000;font-weight:700;font-family:'Liberation Serif',serif;"><i>一</i><i class="p">、</i></div>
<div class="a t" style="left:1072px;top:562.4px;font-size:41px;line-height:41px;color:#000;font-weight:700;font-family:'Liberation Serif',serif;"><i>引</i><i>言</i></div>
<div class="a" style="left:746px;top:382px;width:1540px;height:774px;overflow:hidden">
<div class="a t f" style="left:229px;top:281.9px;width:1228px;font-size:26.67px;line-height:26.67px;color:#3c3c3c;font-family:'Liberation Serif',serif;"><i style="width:26.52px">自</i><i style="width:26.52px">工</i><i style="width:26.52px">业</i><i style="width:26.52px">革</i><i style="width:26.52px">命</i><i style="width:26.52px">以</i><i style="width:26.52px">来</i><i class="p" style="width:26.52px">，</i><i style="width:26.52px">每</i><i style="width:26.52px">一</i><i style="width:26.52px">次</i><i style="width:26.52px">重</i><i style="width:26.52px">大</i><i style="width:26.52px">技</i><i style="width:26.52px">术</i><i style="width:26.52px">革</i><i style="width:26.52px">新</i><i style="width:26.52px">都</i><i style="width:26.52px">伴</i><i style="width:26.52px">随</i><i style="width:26.52px">着</i><i style="width:26.52px">对</i>“<i style="width:26.52px">技</i><i style="width:26.52px">术</i><i style="width:26.52px">性</i><i style="width:26.52px">失</i><i style="width:26.52px">业</i>”<i style="width:26.52px">的</i><i style="width:26.52px">担</i><i style="width:26.52px">忧</i><i style="width:26.52px">与</i><i style="width:26.52px">对</i><i style="width:26.52px">就</i><i style="width:26.52px">业</i><i style="width:26.52px">结</i><i style="width:26.52px">构</i><i style="width:26.52px">重</i><i style="width:26.52px">塑</i><i style="width:26.52px">的</i><i style="width:26.52px">讨</i><i style="width:26.52px">论</i><i class="p" style="width:26.52px">。</i><i style="width:26.52px">当</i><i style="width:26.52px">前</i><i class="p" style="width:26.52px">，</i><i style="width:26.52px">以</i></div>
<div class="a t f" style="left:229px;top:333.9px;width:1228px;font-size:26.67px;line-height:26.67px;color:#3c3c3c;font-family:'Liberation Serif',serif;justify-content:space-between;"><i style="width:26.67px">人</i><i style="width:26.67px">工</i><i style="width:26.67px">智</i><i style="width:26.67px">能</i><i style="width:26.67px">为</i><i style="width:26.67px">代</i><i style="width:26.67px">表</i><i style="width:26.67px">的</i><i style="width:26.67px">第</i><i style="width:26.67px">四</i><i style="width:26.67px">次</i><i style="width:26.67px">工</i><i style="width:26.67px">业</i><i style="width:26.67px">革</i><i style="width:26.67px">命</i><i style="width:26.67px">浪</i><i style="width:26.67px">潮</i><i class="p" style="width:26.67px">，</i><i style="width:26.67px">因</i><i style="width:26.67px">其</i><i style="width:26.67px">渗</i><i style="width:26.67px">透</i><i style="width:26.67px">的</i><i style="width:26.67px">广</i><i style="width:26.67px">泛</i><i style="width:26.67px">性</i><i class="p" style="width:26.67px">、</i><i style="width:26.67px">影</i><i style="width:26.67px">响</i><i style="width:26.67px">的</i><i style="width:26.67px">深</i><i style="width:26.67px">刻</i><i style="width:26.67px">性</i><i style="width:26.67px">和</i><i style="width:26.67px">发</i><i style="width:26.67px">展</i><i style="width:26.67px">的</i><i style="width:26.67px">不</i><i style="width:26.67px">确</i><i style="width:26.67px">定</i><i style="width:26.67px">性</i><i class="p" style="width:26.67px">，</i><i style="width:26.67px">引</i><i style="width:26.67px">发</i><i style="width:26.67px">了</i><i style="width:26.67px">全</i></div>
<div class="a t f" style="left:229px;top:385.9px;width:1228px;font-size:26.67px;line-height:26.67px;color:#3c3c3c;font-family:'Liberation Serif',serif;justify-content:space-between;"><i style="width:26.67px">球</i><i style="width:26.67px">范</i><i style="width:26.67px">围</i><i style="width:26.67px">内</i><i style="width:26.67px">对</i><i style="width:26.67px">就</i><i style="width:26.67px">业</i><i style="width:26.67px">前</i><i style="width:26.67px">景</i><i style="width:26.67px">的</i><i style="width:26.67px">广</i><i style="width:26.67px">泛</i><i style="width:26.67px">关</i><i style="width:26.67px">切</i><i class="p" style="width:26.67px">。</i><i style="width:26.67px">与</i><i style="width:26.67px">以</i><i style="width:26.67px">往</i><i style="width:26.67px">自</i><i style="width:26.67px">动</i><i style="width:26.67px">化</i><i style="width:26.67px">技</i><i style="width:26.67px">术</i><i style="width:26.67px">主</i><i style="width:26.67px">要</i><i style="width:26.67px">替</i><i style="width:26.67px">代</i><i style="width:26.67px">体</i><i style="width:26.67px">力</i><i style="width:26.67px">劳</i><i style="width:26.67px">动</i><i style="width:26.67px">不</i><i style="width:26.67px">同</i><i class="p" style="width:26.67px">，</i><i style="width:26.67px">人</i><i style="width:26.67px">工</i><i style="width:26.67px">智</i><i style="width:26.67px">能</i><i style="width:26.67px">在</i><i style="width:26.67px">认</i><i style="width:26.67px">知</i><i style="width:26.67px">领</i><i style="width:26.67px">域</i><i style="width:26.67px">的</i><i style="width:26.67px">强</i><i style="width:26.67px">大</i></div>
<div class="a t f" style="left:229px;top:437.9px;width:1228px;font-size:26.67px;line-height:26.67px;color:#3c3c3c;font-family:'Liberation Serif',serif;"><i style="width:26.67px">能</i><i style="width:26.67px">力</i><i class="p" style="width:26.67px">，</i><i style="width:26.67px">使</i><i style="width:26.67px">得</i><i style="width:26.67px">大</i><i style="width:26.67px">量</i><i style="width:26.67px">白</i><i style="width:26.67px">领</i><i style="width:26.67px">和</i><i style="width:26.67px">知</i><i style="width:26.67px">识</i><i style="width:26.67px">型</i><i style="width:26.67px">工</i><i style="width:26.67px">作</i><i style="width:26.67px">也</i><i style="width:26.67px">面</i><i style="width:26.67px">临</i><i style="width:26.67px">被</i><i style="width:26.67px">自</i><i style="width:26.67px">动</i><i style="width:26.67px">化</i><i style="width:26.67px">替</i><i style="width:26.67px">代</i><i style="width:26.67px">的</i><i style="width:26.67px">风</i><i style="width:26.67px">险</i><i class="p" style="width:26.67px">。</i></div>
<div class="a t f" style="left:229px;top:489.9px;width:1228px;font-size:26.67px;line-height:26.67px;color:#3c3c3c;font-family:'Liberation Serif',serif;"><i style="width:26.38px">然</i><i style="width:26.38px">而</i><i class="p" style="width:26.38px">，</i><i style="width:26.38px">历</i><i style="width:26.38px">史</i><i style="width:26.38px">经</i><i style="width:26.38px">验</i><i style="width:26.38px">表</i><i style="width:26.38px">明</i><i class="p" style="width:26.38px">，</i><i style="width:26.38px">技</i><i style="width:26.38px">术</i><i style="width:26.38px">既</i><i style="width:26.38px">是</i>“<i style="width:26.38px">破</i><i style="width:26.38px">坏</i><i style="width:26.38px">者</i>”<i class="p" style="width:26.38px">，</i><i style="width:26.38px">也</i><i style="width:26.38px">是</i>“<i style="width:26.38px">创</i><i style="width:26.38px">造</i><i style="width:26.38px">者</i>”<i class="p" style="width:26.38px">。</i><i style="width:26.38px">它</i><i style="width:26.38px">在</i><i style="width:26.38px">消</i><i style="width:26.38px">灭</i><i style="width:26.38px">旧</i><i style="width:26.38px">岗</i><i style="width:26.38px">位</i><i style="width:26.38px">的</i><i style="width:26.38px">同</i><i style="width:26.38px">时</i><i class="p" style="width:26.38px">，</i><i style="width:26.38px">也</i><i style="width:26.38px">会</i><i style="width:26.38px">催</i><i style="width:26.38px">生</i><i style="width:26.38px">新</i><i style="width:26.38px">的</i><i style="width:26.38px">产</i><i style="width:26.38px">业</i><i class="p" style="width:26.38px">、</i><i style="width:26.38px">新</i></div>
<div class="a t f" style="left:229px;top:541.9px;width:1228px;font-size:26.67px;line-height:26.67px;color:#3c3c3c;font-family:'Liberation Serif',serif;justify-content:space-between;"><i style="width:26.67px">的</i><i style="width:26.67px">商</i><i style="width:26.67px">业</i><i style="width:26.67px">模</i><i style="width:26.67px">式</i><i style="width:26.67px">和</i><i style="width:26.67px">新</i><i style="width:26.67px">的</i><i style="width:26.67px">职</i><i style="width:26.67px">业</i><i style="width:26.67px">类</i><i style="width:26.67px">别</i><i class="p" style="width:26.67px">。</i><i style="width:26.67px">因</i><i style="width:26.67px">此</i><i class="p" style="width:26.67px">，</i><i style="width:26.67px">全</i><i style="width:26.67px">面</i><i style="width:26.67px">评</i><i style="width:26.67px">估</i><i style="width:26.67px">人</i><i style="width:26.67px">工</i><i style="width:26.67px">智</i><i style="width:26.67px">能</i><i style="width:26.67px">对</i><i style="width:26.67px">就</i><i style="width:26.67px">业</i><i style="width:26.67px">的</i><i style="width:26.67px">影</i><i style="width:26.67px">响</i><i class="p" style="width:26.67px">，</i><i style="width:26.67px">不</i><i style="width:26.67px">能</i><i style="width:26.67px">局</i><i style="width:26.67px">限</i><i style="width:26.67px">于</i><i style="width:26.67px">简</i><i style="width:26.67px">单</i><i style="width:26.67px">的</i><i style="width:26.67px">岗</i><i style="width:26.67px">位</i><i style="width:26.67px">数</i><i style="width:26.67px">量</i><i style="width:26.67px">增</i><i style="width:26.67px">减</i><i class="p" style="width:26.67px">，</i></div>
<div class="a t f" style="left:229px;top:593.9px;width:1228px;font-size:26.67px;line-height:26.67px;color:#3c3c3c;font-family:'Liberation Serif',serif;justify-content:space-between;"><i style="width:26.67px">而</i><i style="width:26.67px">应</i><i style="width:26.67px">深</i><i style="width:26.67px">入</i><i style="width:26.67px">分</i><i style="width:26.67px">析</i><i style="width:26.67px">其</i><i style="width:26.67px">对</i><i style="width:26.67px">工</i><i style="width:26.67px">作</i><i style="width:26.67px">任</i><i style="width:26.67px">务</i><i style="width:26.67px">内</i><i style="width:26.67px">容</i><i class="p" style="width:26.67px">、</i><i style="width:26.67px">技</i><i style="width:26.67px">能</i><i style="width:26.67px">需</i><i style="width:26.67px">求</i><i style="width:26.67px">结</i><i style="width:26.67px">构</i><i style="width:26.67px">以</i><i style="width:26.67px">及</i><i style="width:26.67px">劳</i><i style="width:26.67px">动</i><i style="width:26.67px">力</i><i style="width:26.67px">市</i><i style="width:26.67px">场</i><i style="width:26.67px">组</i><i style="width:26.67px">织</i><i style="width:26.67px">形</i><i style="width:26.67px">态</i><i style="width:26.67px">的</i><i style="width:26.67px">根</i><i style="width:26.67px">本</i><i style="width:26.67px">性</i><i style="width:26.67px">改</i><i style="width:26.67px">变</i><i class="p" style="width:26.67px">。</i><i style="width:26.67px">请</i><i style="width:26.67px">插</i><i style="width:26.67px">入</i><i style="width:26.67px">一</i><i style="width:26.67px">些</i><i style="width:26.67px">引</i><i style="width:26.67px">用</i></div>
<div class="a t f" style="left:229px;top:645.9px;width:1228px;font-size:26.67px;line-height:26.67px;color:#3c3c3c;font-family:'Liberation Serif',serif;"><i style="width:26.67px">到</i><i style="width:26.67px">文</i><i style="width:26.67px">档</i><i style="width:26.67px">中</i><i class="p" style="width:26.67px">。</i></div>
<div class="a t f" style="left:229px;top:697.9px;width:1228px;font-size:26.67px;line-height:26.67px;color:#3c3c3c;font-family:'Liberation Serif',serif;justify-content:space-between;"><i style="width:26.67px">本</i><i style="width:26.67px">研</i><i style="width:26.67px">究</i><i style="width:26.67px">将</i><i style="width:26.67px">从</i><i style="width:26.67px">技</i><i style="width:26.67px">能</i><i style="width:26.67px">结</i><i style="width:26.67px">构</i><i style="width:26.67px">的</i><i style="width:26.67px">理</i><i style="width:26.67px">论</i><i style="width:26.67px">视</i><i style="width:26.67px">角</i><i style="width:26.67px">出</i><i style="width:26.67px">发</i><i class="p" style="width:26.67px">，</i><i style="width:26.67px">系</i><i style="width:26.67px">统</i><i style="width:26.67px">梳</i><i style="width:26.67px">理</i><i style="width:26.67px">人</i><i style="width:26.67px">工</i><i style="width:26.67px">智</i><i style="width:26.67px">能</i><i style="width:26.67px">影</i><i style="width:26.67px">响</i><i style="width:26.67px">就</i><i style="width:26.67px">业</i><i style="width:26.67px">的</i><i style="width:26.67px">内</i><i style="width:26.67px">在</i><i style="width:26.67px">机</i><i style="width:26.67px">制</i><i class="p" style="width:26.67px">，</i><i style="width:26.67px">辩</i><i style="width:26.67px">证</i><i style="width:26.67px">分</i><i style="width:26.67px">析</i><i style="width:26.67px">其</i><i style="width:26.67px">带</i><i style="width:26.67px">来</i><i style="width:26.67px">的</i><i style="width:26.67px">挑</i><i style="width:26.67px">战</i><i style="width:26.67px">与</i></div>
<div class="a t f" style="left:229px;top:749.9px;width:1228px;font-size:26.67px;line-height:26.67px;color:#3c3c3c;font-family:'Liberation Serif',serif;"><i style="width:26.67px">机</i><i style="width:26.67px">遇</i><i class="p" style="width:26.67px">，</i><i style="width:26.67px">并</i><i style="width:26.67px">尝</i><i style="width:26.67px">试</i><i style="width:26.67px">提</i><i style="width:26.67px">出</i><i style="width:26.67px">具</i><i style="width:26.67px">有</i><i style="width:26.67px">前</i><i style="width:26.67px">瞻</i><i style="width:26.67px">性</i><i style="width:26.67px">的</i><i style="width:26.67px">应</i><i style="width:26.67px">对</i><i style="width:26.67px">策</i><i style="width:26.67px">略</i><i class="p" style="width:26.67px">，</i><i style="width:26.67px">以</i><i style="width:26.67px">期</i><i style="width:26.67px">为</i><i style="width:26.67px">政</i><i style="width:26.67px">策</i><i style="width:26.67px">制</i><i style="width:26.67px">定</i><i style="width:26.67px">者</i><i class="p" style="width:26.67px">、</i><i style="width:26.67px">教</i><i style="width:26.67px">育</i><i style="width:26.67px">机</i><i style="width:26.67px">构</i><i style="width:26.67px">和</i><i style="width:26.67px">劳</i><i style="width:26.67px">动</i><i style="width:26.67px">者</i><i style="width:26.67px">个</i><i style="width:26.67px">人</i><i style="width:26.67px">提</i><i style="width:26.67px">供</i><i style="width:26.67px">参</i><i style="width:26.67px">考</i><i class="p" style="width:26.67px">。</i></div>
</div>
<svg class="a" style="left:2341px;top:333px;" width="26" height="28" viewBox="0 0 26 28">
<path d="M13 2 H25 M13 2 V27 M20 2 V27 M13 2 Q2 2 2 8.5 Q2 15 13 15" fill="none" stroke="#333" stroke-width="2.2"/>
</svg>
<svg class="a" style="left:2338px;top:400px;" width="32" height="28" viewBox="0 0 32 28">
<rect x="1.2" y="1.2" width="29.6" height="25.6" rx="3" fill="none" stroke="#9d9d9d" stroke-width="2.2"/>
<path d="M1.2 4 H30.8" stroke="#9d9d9d" stroke-width="4"/>
<path d="M1.2 10.5 H30.8 M1.2 18.5 H30.8 M11 4 V26.8 M21 4 V26.8" stroke="#9d9d9d" stroke-width="2"/>
</svg>
<svg class="a" style="left:2340px;top:468px;" width="28" height="28" viewBox="0 0 28 28">
<rect x="1.2" y="1.2" width="25.6" height="25.6" rx="2.5" fill="none" stroke="#9d9d9d" stroke-width="2.2"/>
<circle cx="19" cy="8.5" r="2" fill="none" stroke="#9d9d9d" stroke-width="1.8"/>
<path d="M1.5 25 L14 14 L26.5 25" fill="none" stroke="#9d9d9d" stroke-width="2.2"/>
</svg>
<svg class="a" style="left:2342px;top:534px;" width="24" height="32" viewBox="0 0 24 32">
<rect x="1.2" y="1.2" width="21.6" height="29.6" rx="3" fill="none" stroke="#9d9d9d" stroke-width="2.2"/>
<rect x="5.5" y="5.5" width="13" height="3" rx="1" fill="none" stroke="#9d9d9d" stroke-width="1.8"/>
<rect x="5.5" y="23" width="13" height="3" rx="1" fill="none" stroke="#9d9d9d" stroke-width="1.8"/>
</svg>
<svg class="a" style="left:2338px;top:603px;" width="31" height="31" viewBox="0 0 31 31">
<path d="M12 21 A10.5 10.5 0 1 1 21 11.5" fill="none" stroke="#9d9d9d" stroke-width="2.2"/>
<rect x="11.5" y="11.5" width="18" height="18" rx="2" fill="none" stroke="#9d9d9d" stroke-width="2.2"/>
</svg>
<svg class="a" style="left:2340px;top:671px;" width="28" height="29" viewBox="0 0 28 29">
<rect x="1.2" y="18" width="6" height="9.8" rx="1.5" fill="none" stroke="#9d9d9d" stroke-width="2.2"/>
<rect x="11" y="10" width="6" height="17.8" rx="1.5" fill="none" stroke="#9d9d9d" stroke-width="2.2"/>
<rect x="20.8" y="1.2" width="6" height="26.6" rx="1.5" fill="none" stroke="#9d9d9d" stroke-width="2.2"/>
</svg>
<svg class="a" style="left:2340px;top:739px;" width="28" height="30" viewBox="0 0 28 30">
<path d="M5 19 L14 1.5 L23 19 M8 13 H20" fill="none" stroke="#9d9d9d" stroke-width="2"/>
<path d="M1.5 28.5 Q14 19 26.5 28.5" fill="none" stroke="#9d9d9d" stroke-width="2"/>
</svg>
<svg class="a" style="left:2340px;top:806px;" width="28" height="31" viewBox="0 0 28 31">
<path d="M1.2 12 V27.5 Q1.2 29.8 3.5 29.8 H24.5 Q26.8 29.8 26.8 27.5 V12" fill="none" stroke="#9d9d9d" stroke-width="2.2"/>
<path d="M1.2 12 L14 21 L26.8 12" fill="none" stroke="#9d9d9d" stroke-width="2.2"/>
<path d="M6 15 V3.5 Q6 1.2 8.3 1.2 H19.7 Q22 1.2 22 3.5 V15" fill="none" stroke="#9d9d9d" stroke-width="2.2"/>
<path d="M10 7 H18 M10 11 H16" stroke="#9d9d9d" stroke-width="2"/>
</svg>
<div class="a" style="left:0px;top:1184px;width:2390px;height:62px;background:#fff;border-top:2px solid #c8c8c8"></div>
<div class="a" style="left:149px;top:1186px;width:2px;height:60px;background:#dedede"></div>
<div class="a" style="left:1456px;top:1186px;width:2px;height:60px;background:#dedede"></div>
<div class="a" style="left:1870px;top:1186px;width:2px;height:60px;background:#dedede"></div>
<div class="a" style="left:1976px;top:1186px;width:2px;height:60px;background:#dedede"></div>
<div class="a t" style="left:15.5px;top:1204.5px;font-size:23.5px;line-height:23.5px;color:#333;font-weight:400;font-family:'Liberation Sans',sans-serif;"><i>第</i>1<i>页</i><i>共</i>3<i>页</i></div>
<svg class="a" style="left:174px;top:1202px;" width="26" height="26" viewBox="0 0 26 26">
<path d="M1 1.2 H25 M1 13 H25" stroke="#333" stroke-width="2"/>
<text x="0" y="25.8" font-family="Liberation Sans" font-weight="700" font-size="12.5" letter-spacing="1" fill="#4b6fcf">12</text>
<path d="M19 22 H25" stroke="#333" stroke-width="2"/>
</svg>
<div class="a t" style="left:220px;top:1204.2px;font-size:24px;line-height:24px;color:#333;font-weight:400;font-family:'Liberation Sans',sans-serif;"><i>字</i><i>数</i><i>统</i><i>计</i></div>
<div class="a t" style="left:1480px;top:1204.2px;font-size:24px;line-height:24px;color:#333;font-weight:400;font-family:'Liberation Sans',sans-serif;"><i>中</i><i>文</i>– <i>中</i><i>华</i><i>人</i><i>民</i><i>共</i><i>和</i><i>国</i></div>
<svg class="a" style="left:1731.5px;top:1213px;" width="13" height="8.5" viewBox="0 0 13 8.5"><path d="M1 1 L6.5 7.0 L12 1" fill="none" stroke="#333" stroke-width="2"/></svg>
<svg class="a" style="left:1761px;top:1199px;" width="34" height="34" viewBox="0 0 34 34">
<circle cx="17" cy="17" r="15" fill="none" stroke="#333" stroke-width="2.2"/>
<ellipse cx="17" cy="17" rx="7" ry="15" fill="none" stroke="#333" stroke-width="2.2"/>
<path d="M2 11.5 H32 M2 22.5 H32" stroke="#333" stroke-width="2.2"/>
</svg>
<svg class="a" style="left:1820px;top:1202px;" width="33" height="33" viewBox="0 0 33 33">
<path d="M10 26.5 H2.2 V1.2 H26 Q27.8 1.2 27.8 3 V18" fill="none" stroke="#333" stroke-width="2.2"/>
<path d="M8.5 19.5 L14.5 5 L20.5 19.5 M10.5 14.5 H18.5" fill="none" stroke="#333" stroke-width="1.9"/>
<path d="M17 25.5 L22 31 L32 20" fill="none" stroke="#4b6fcf" stroke-width="2.2"/>
</svg>
<svg class="a" style="left:1891px;top:1202px;" width="33" height="27" viewBox="0 0 33 27">
<path d="M1 3 H9 M1 8.5 H12" stroke="#4b6fcf" stroke-width="2.2"/>
<path d="M7 25.5 V19 L24 2 Q26 0 28 2 L30.5 4.5 Q32.5 6.5 30.5 8.5 L13.5 25.5 Z" fill="none" stroke="#333" stroke-width="2.2" stroke-linejoin="round"/>
</svg>
<svg class="a" style="left:1941.5px;top:1212px;" width="13" height="8.5" viewBox="0 0 13 8.5"><path d="M1 1 L6.5 7.0 L12 1" fill="none" stroke="#333" stroke-width="2"/></svg>
<svg class="a" style="left:2002px;top:1199px;" width="25" height="34" viewBox="0 0 25 34">
<rect x="1.2" y="1.2" width="22.6" height="31.6" rx="3" fill="none" stroke="#333" stroke-width="2.2"/>
<path d="M5 10 V5.5 H9.5 M15.5 5.5 H20 V10 M20 24 V28.5 H15.5 M9.5 28.5 H5 V24" fill="none" stroke="#4b6fcf" stroke-width="2"/>
</svg>
<svg class="a" style="left:2063px;top:1199px;" width="30" height="34" viewBox="0 0 30 34">
<path d="M4 19 V3.5 Q4 1.2 6.3 1.2 H23.7 Q26 1.2 26 3.5 V19" fill="none" stroke="#333" stroke-width="2.2"/>
<path d="M1.5 27 H13 M6 22.5 L1.5 27 L6 31.5 M17 27 H28.5 M24 22.5 L28.5 27 L24 31.5" fill="none" stroke="#4b6fcf" stroke-width="2.2"/>
</svg>
<div class="a" style="left:2127px;top:1213.8px;width:27px;height:2.2px;background:#333"></div>
<div class="a t" style="left:2191.5px;top:1205.2px;font-size:24px;line-height:24px;color:#333;font-weight:400;font-family:'Liberation Sans',sans-serif;"><i>縮</i><i>放</i>100%</div>
<svg class="a" style="left:2335px;top:1202px;" width="27" height="26" viewBox="0 0 27 26"><path d="M13.5 0 V26 M0.5 13 H26.5" stroke="#333" stroke-width="2.2"/></svg>
<svg class="a" style="left:2383px;top:1239px;" width="7" height="7" viewBox="0 0 7 7"><path d="M7 0 A7 7 0 0 1 0 7 L7 7 Z" fill="#2b2f36"/></svg>
<svg class="a" style="left:0px;top:1241px;" width="5" height="5" viewBox="0 0 5 5"><path d="M0 0 A5 5 0 0 0 5 5 L0 5 Z" fill="#b8b8b8"/></svg>
<script>
(function(){var s=document.createElement('span');s.style.cssText="position:absolute;left:-9999px;top:0;font-size:100px;font-family:'Liberation Sans';white-space:nowrap";s.textContent='自工';document.body.appendChild(s);var w=s.getBoundingClientRect().width;s.parentNode.removeChild(s);if(Math.abs(w-200)>6)document.documentElement.className+=' nf';})();
</script>
</body></html>
